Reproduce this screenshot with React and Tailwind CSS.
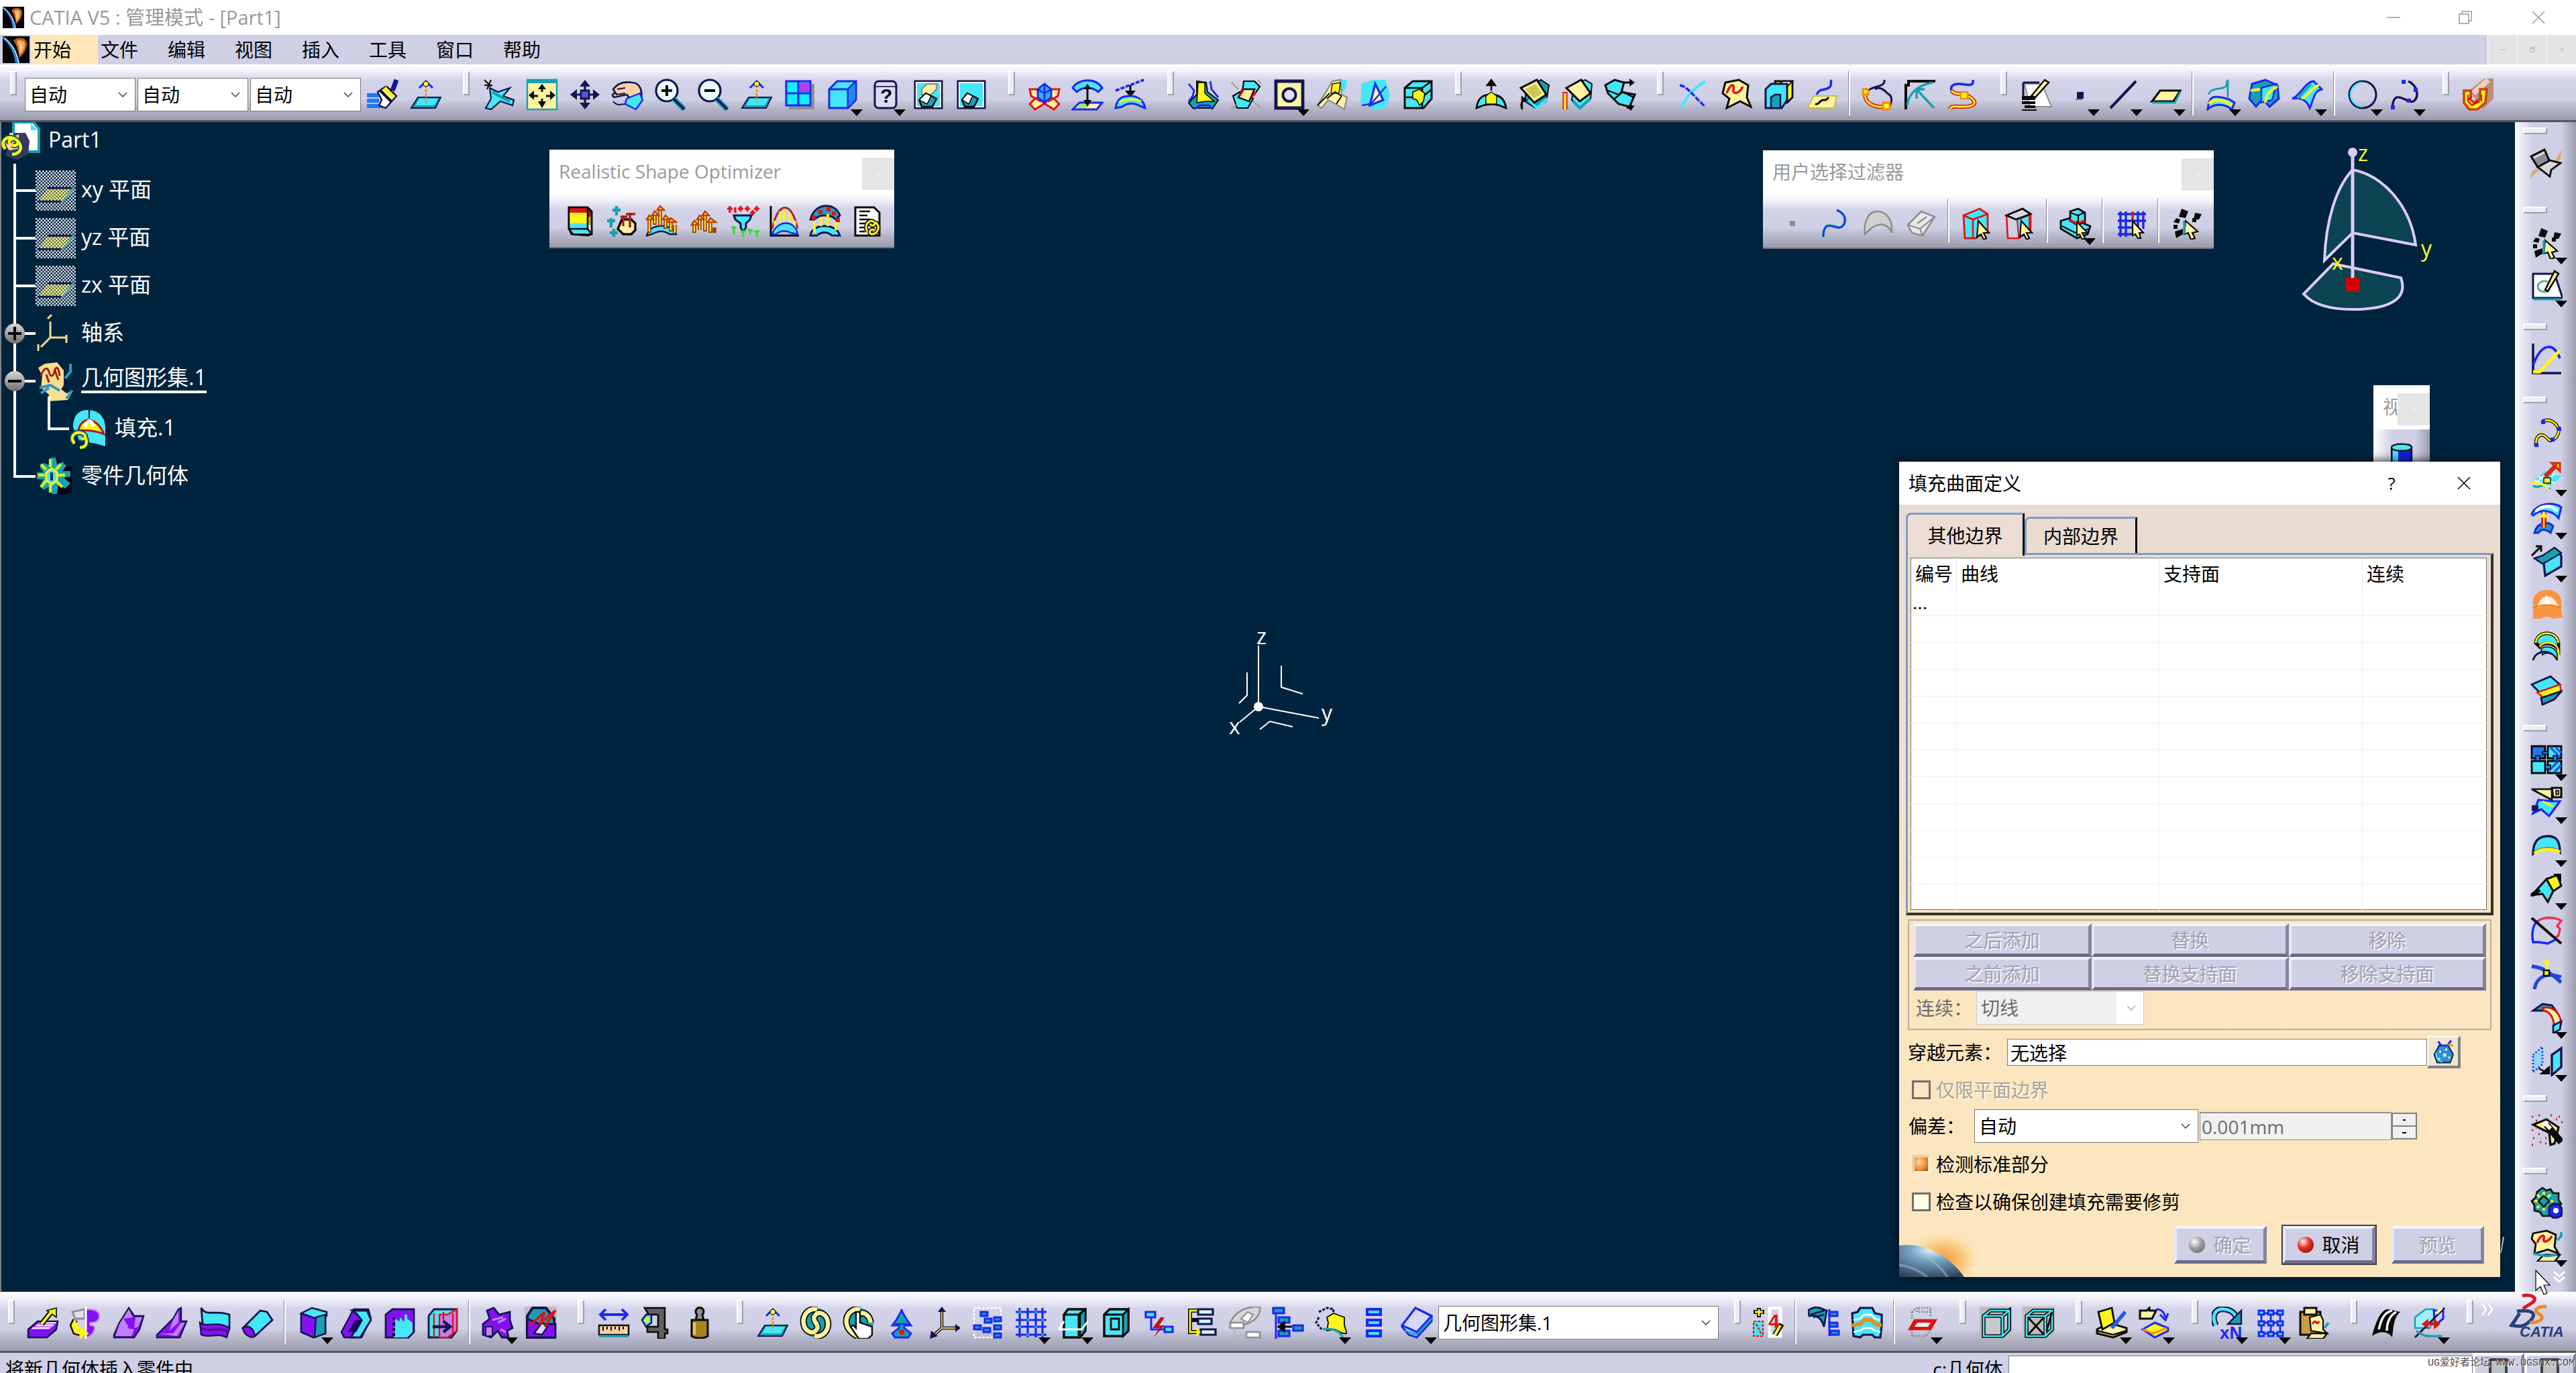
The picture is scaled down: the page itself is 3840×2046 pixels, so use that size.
import React from "react";

const C = "#45e6f8";
const T = "#18a0b0";
const N = "#15154f";
const B = "#1a28f0";
const Y = "#fff41c";
const L = "#fff3a0";
const K = "#0a0a0a";
const V = "#8410f4";
const P = "#c080f8";
const R = "#e01414";
const O = "#f08a10";
const W = "#ffffff";
const G = "#8e8e8e";

/* Each glyph is a list of [path, fill, stroke, strokeWidth, dash] on a 24 x 24 grid. */
const glyphs = {
  brush: [
    ["M0 11h11v3H0zM0 15h9v3H0zM0 19h14v3H0z", "#1e78f8"],
    ["M8 10l6-4 8 7-8 9-5-2 2-4z", W, N, 1.2],
    ["M10 9l8 8", "none", K, 2],
    ["M13 7l7 7", "none", Y, 3],
    ["M15 6l6 6", "none", K, 1],
    ["M19 9l3-8", "none", "#1010a0", 3.500],
  ],
  normal: [
    ["M6 14h17l-4 8H1z", T, N, 1],
    ["M7 15h14l-3 5H4z", C],
    ["M12 5v13", "none", O, 1.300, "2 1"],
    ["M7 7l5-5 5 5", "none", B, 1.500],
    ["M12 2a2 2 0 1 1 0 4 2 2 0 1 1 0-4z", Y, K, 0.500],
  ],
  fly: [
    ["M5 7l6 3 9-3-5 6 8 3-1 4-9-3-7 6-4-1 4-7z", C, N, 1.100],
    ["M7 10l5 3 8 4", "none", T, 2],
    ["M1 1l5 5M6 1L3 8M1 5l6 0", "none", K, 1],
  ],
  fit: [
    ["M1 1h22v22H1z", L, T, 1.200],
    ["M1 1h22v2.500H1z", T],
    ["M12 5v5M12 15v5M4 13h5M15 13h5", "none", K, 1.400],
    ["M9 8l3-4 3 4zM9 17l3 5 3-5zM6 9v7l-4-3.500zM18 9v7l4-3.500z", K],
  ],
  pan: [
    ["M12 3v18M3 12h18", "none", N, 1.600],
    ["M8 6l4-5 4 5zM8 18l4 5 4-5zM6 8v8l-5-4zM18 8v8l5-4z", N],
    ["M9 9h6v6H9z", "#5858d8", N, 1.400],
  ],
  rotate: [
    ["M1 8c3-4 8-6 14-5 5 0 8 5 7 11l-8 1-3-3-9 2c-2-1-2-3 1-3z", "#fbd0a8", N, 1.300],
    ["M11 15l10-4 2 5-5 7-8-4z", C, B, 1.200],
    ["M3 12l7-1M1 17c3 4 6 2 9 2M4 8l6-1", "none", N, 1],
  ],
  zoomin: [
    ["M9 1a7.500 7.500 0 1 1 0 16 7.500 7.500 0 1 1 0-16z", "#e8fcff", N, 1.600],
    ["M9 5v8M5 9h8", "none", K, 2],
    ["M14 15l8 8", "none", T, 4],
    ["M14 15l8 8", "none", N, 1.800],
  ],
  zoomout: [
    ["M9 1a7.500 7.500 0 1 1 0 16 7.500 7.500 0 1 1 0-16z", "#e8fcff", N, 1.600],
    ["M5 9h8", "none", K, 2],
    ["M14 15l8 8", "none", T, 4],
    ["M14 15l8 8", "none", N, 1.800],
  ],
  multiview: [
    ["M4 4h19v19H4z", G],
    ["M2 2h18v18H2z", "#10f0ff", B, 1.500],
    ["M12 3h7v7h-7z", "#b040e8"],
    ["M11 2v18M2 11h18", "none", B, 1.500],
  ],
  iso: [
    ["M2 8l6-6h14v14l-6 6H2z", C, B, 1.500],
    ["M2 8h14v14M16 8l6-6", "none", B, 1.500],
    ["M17 8l4-4v12l-4 4z", "#2088e8"],
  ],
  help: [["M7 2h10a3 3 0 0 1 3 3v14a3 3 0 0 1-3 3H7a3 3 0 0 1-3-3V5a3 3 0 0 1 3-3z", "#dcdcf4", N, 1.500], ["M4 6l16 0", "none", N, 0.800]],
  hide: [
    ["M2 2h20v20H2z", C, N, 1.500],
    ["M3 3h18v18H3z", "none", W, 1],
    ["M7 8l4-4h7v4l-4 4H7z", L, G, 1.200],
    ["M5 16l5-5 8 4-3 6H7z", T, K, 1.200],
    ["M5 16l5-5 4 2-3 6z", W, K, 0.800],
  ],
  swap: [
    ["M2 2h20v20H2z", C, N, 1.500],
    ["M3 3h18v18H3z", "none", W, 1],
    ["M5 16l4-5 8 4-3 6H7z", T, K, 1.200],
    ["M5 16l4-5 4 2-3 6z", W, K, 0.800],
  ],
  cross: [
    ["M1 8h5l6 6-3 3-7-4zM23 8h-5l-6 6 3 3 7-4zM1 19l4 4 8-5-3-4-5 1zM23 19l-4 4-8-5 3-4 5 1z", L, R, 1.500],
    ["M12 4l5 4v6l-5 4-5-4V8z", "#38a8ff", B, 1.400],
    ["M12 4v14M7 8l5 3 5-3", "none", B, 1.300],
  ],
  updown: [
    ["M1 7c4-7 17-8 22 0l-3 3c-4-4-12-4-16 0z", C, B, 1.500],
    ["M6 18h17l-4 5H1z", L, B, 1.500],
    ["M6 19h8l-3 3H4z", "#98f060"],
    ["M12 6v12", "none", K, 1.500],
    ["M9 8l3-4 3 4zM9 16l3 5 3-5z", K],
  ],
  project: [
    ["M1 9L22 1", "none", B, 1.800, "3 1"],
    ["M12 5v8", "none", K, 1.500],
    ["M8 9l4 5 4-5z", K],
    ["M1 22c1-8 6-9 11-9s10 3 11 9l-5-2c-3-2-8-2-12 1z", C, B, 1.500],
    ["M4 18c3-3 12-3 16-1", "none", Y, 1.600],
  ],
  join: [
    ["M7 2l7 1 1 7 8 6-4 6H4l-3-4 6-6z", T, K, 1],
    ["M8 3h5v8l7 6-6 0-7 1z", Y, K, 0.800],
    ["M1 4l4 5-1 4-3 4M17 2l1 6 5 6M5 23l4-3h7l3 3", "none", B, 1.400],
  ],
  healing: [
    ["M10 2h8l4 4-4 6-9-2zM2 13l5-3 10 5-4 7-8 0z", C, K, 1.100],
    ["M9 8h9l-4 9-8-3z", L, K, 1.200],
    ["M1 3l5 5M17 17l6 5M21 1l2 3M1 23l4-4", "none", G, 1.400, "1 1"],
    ["M7 13l3-5M16 14l3-4", "none", R, 1.500],
  ],
  untrim: [
    ["M2 2h20v20H2z", L, N, 2.400],
    ["M12 7.500a4.500 4.500 0 1 1 0 9.500 4.500 4.500 0 1 1 0-9.500z", "#e0e0f4", N, 2],
  ],
  disassemble: [
    ["M17 1h6l-1 7-4 3z", C],
    ["M8 9l4-7 6-1 1 11 4 2-2 9-5-3-7-4-5 6-3-2z", L, G, 1.200],
    ["M12 4l6-1-1 8-6 0z", Y, K, 0.700],
    ["M1 20l9-9M8 15l6-5 5 3M15 19l4-6", "none", K, 1],
  ],
  split: [
    ["M2 4l8-3h10l3 12-3 9-9 1L1 18z", C],
    ["M12 4l6 12-10 4z", L, B, 1.600],
    ["M8 20L20 6M2 20l6-1", "none", B, 1.200],
  ],
  cubecut: [
    ["M2 7l6-5h14v13l-6 7H2z", C, K, 1.500],
    ["M2 7h13v15M15 7l7-5M3 14h12l7-6", "none", K, 1.300],
    ["M8 10l5-2 4 3-1 6-3 3-2-4-3-1z", Y, K, 0.800],
  ],
  offset: [
    ["M1 22c1-8 5-10 11-10s10 3 11 10l-5-2c-3-1-8-1-12 0z", C, K, 1.400],
    ["M8 19v-6l4-3 4 3v6z", Y, K, 0.700],
    ["M12 9V2M9 5l3-4 3 4z", K, K, 1.200],
  ],
  sweep: [
    ["M6 8l11-7 6 4-2 12-8 5-8-5z", T, K, 1],
    ["M8 16l6 6 8-7", "none", C, 2],
    ["M2 7L14 1l7 11-9 6z", L, K, 1.500],
    ["M5 8l8-4 5 7-6 4z", "#cfc850"],
    ["M3 23c-2-5 0-6 3-7l-3-2z", K, K, 1.200],
  ],
  sweep2: [
    ["M10 4l8-3 5 3-1 11-8 7-6-6z", C, K, 1],
    ["M4 7l11-6 7 10-8 6z", L, K, 1.500],
    ["M3 23V10", "none", R, 3.600],
    ["M3 23V11", "none", Y, 1.800],
    ["M9 17l5 5 8-7", "none", T, 2],
  ],
  developed: [
    ["M1 5l7-4 7 2-2 7 10 2-4 9-8-2-8-8z", C, K, 1.500],
    ["M3 9l8 3 3-3M8 15l6-5 8 4", "none", K, 1.200],
    ["M14 3h6M17 22l4-2", "none", K, 1.500],
    ["M19 0l4 3-4 3zM20 24l3-4-6 1z", K],
  ],
  xcurve: [
    ["M3 22C8 12 12 8 21 2", "none", C, 2],
    ["M2 5c6 1 10 8 19 16", "none", B, 1.700, "4 1"],
  ],
  sheet: [
    ["M4 3l10-2 7 4-1 9 3 7-8-4-10 5 2-7-5-4z", L, K, 1.500],
    ["M5 11c3-8 6-7 5-3s4 4 7-2", "none", R, 1.700],
  ],
  stack: [
    ["M9 2h13v12l-4 4H9z", Y, K, 1.400],
    ["M15 2h7l-4 4h-9z", W, K, 1],
    ["M2 8l4-4h12v12l-4 6H2z", C, N, 1.500],
    ["M6 22v-8l3-2h4v10z", T, N, 1.200],
  ],
  note: [
    ["M6 13h17l-2 9H1z", L, "#c0c040", 1],
    ["M8 12c2-5 6-3 9-5s1-4 2-6", "none", B, 1.700],
    ["M7 19c3 1 3-3 6-3s2 0 4-2", "none", K, 1.500],
  ],
  curveA: [
    ["M17 1c1 6-10 4-13 9M19 11c5 2 4 9-1 12", "none", N, 1.500],
    ["M4 9c-4 6 2 13 13 12", "none", R, 3],
    ["M4 9c-4 6 2 13 13 12", "none", Y, 1.400],
    ["M1 8h4v4H1zM16 18h5v5h-5z", Y, O, 1.400],
    ["M10 8c3-2 7 0 9 3", "none", N, 1.500],
  ],
  curveB: [
    ["M1 23V5h2V2h20", "none", K, 2],
    ["M2 20c1-9 8-15 19-17", "none", T, 1.700],
    ["M22 22L9 8M9 15V8h6", "none", T, 1.700],
  ],
  curveC: [
    ["M19 1c1 6-6 3-10 3s-7 1-6 5", "none", B, 1.800],
    ["M3 9c3 4 8 1 14 5s3 7-5 7-9-1-10 2", "none", R, 3],
    ["M3 9c3 4 8 1 14 5s3 7-5 7-9-1-10 2", "none", Y, 1.400],
    ["M10 10h5v5h-5z", Y, O, 1.200],
  ],
  sketchtree: [
    ["M3 4h13l7 17H7z", W, G, 1],
    ["M2 3h12M2 3v10", "none", N, 1.500],
    ["M1 13h10v3H1zM1 17h10v2H1zM3 20h8v2H3zM1 23h11v1H1z", K],
    ["M8 13L18 1l3 2-10 11z", L, K, 1.200],
  ],
  point: [["M10 10h5v5h-5z", N], ["M9 15h5v1H9z", T]],
  line: [["M3 22L22 2", "none", N, 2]],
  plane: [["M8 9h15l-5 8H2z", L, K, 1.600], ["M2 18h17l4-8", "none", T, 1.400]],
  extrude: [
    ["M2 23c1-10 4-10 10-9s7 2 10 4l-2 5c-5-4-13-5-18 0z", C, B, 1.500],
    ["M3 19c4-5 11-3 17 1", "none", Y, 2.400],
    ["M3 12c0-6 12-3 13-7s0-3 1-4M17 1v13", "none", T, 1.400],
  ],
  revolve: [
    ["M3 4l10-3 9 4 1 10-7 6-5-6-5 6-5-6z", T, B, 1.500],
    ["M10 7l11-3-3 12-8 2z", C, B, 1.200],
    ["M2 9l7-1M13 18c1-6 3-9 9-12", "none", Y, 2],
  ],
  sphere: [
    ["M1 15c6-2 10-13 16-13l6 6c-6 1-6 8-9 14-2-6-7-8-13-7z", C, B, 1.500],
    ["M8 15c4-1 8-9 13-10", "none", Y, 1.800],
    ["M5 15l10-11", "none", T, 1.500],
  ],
  circle: [["M12 2a10 10 0 1 1 0 20 10 10 0 1 1 0-20z", "none", N, 1.500], ["M12 3a9 9 0 1 0 0 18", "none", C, 1.200]],
  spline: [
    ["M2 22c1-13 7-7 13-5s9-10-1-15", "none", N, 1.700],
    ["M1 20h3v3H1zM13 15h3v3h-3zM18 7h3v3h-3zM9 1h3v3H9z", B],
  ],
  bead: [
    ["M5 9l11-9h7v15l-8 8z", "#b8907c"],
    ["M8 11L19 1", "none", "#f0d0c0", 4],
    ["M1 9h5v7l3 2 4-3V8h5l-1 10-6 5H5l-4-5z", Y, "#d04010", 1.800],
    ["M4 12v5l3 3 6-3M4 16l3-3M7 20l4-4M14 12v5", "none", R, 1.100],
  ],
  /* shape optimiser */
  result: [
    ["M4 2h14l3 3v17l-3 1-12-1-2-4z", "#fff", K, 1.300],
    ["M4 2h14v4H4z", R],
    ["M4 6h14v8H4z", Y],
    ["M4 14h14v4H4zM4 18l3 3h14l-3-3z", C],
    ["M18 2l3 3v4h-3z", "#b01010"],
    ["M18 9h3v6h-3z", "#d0b000"],
    ["M4 2h14v16H4zM18 2l3 3v17H7l-3-4M18 18l3 4", "none", K, 1.300],
  ],
  loads: [
    ["M7 24v-6M4 21h6M5 17v-7M2 12h6M9 8V1M6 4h6", "none", T, 2.200],
    ["M13 11h7l3 3v5l-3 3h-6l-4-4z", L, K, 1.700],
    ["M14 8v8M19 6v11M12 9h5M16 7h7", "none", "#b01818", 1.700],
  ],
  arrowsurf: [
    ["M1 23c2-9 18-10 22-1l-5 0c-4-3-8-3-13 0z", C, N, 1.200],
    ["M3 21V10M7 15V7M11 16V3M15 18V9M19 20v-9M22 21v-6", "none", "#a04000", 2.800],
    ["M3 20V10M7 14V7M11 15V3M15 17V9M19 19v-8M22 21v-6", "none", Y, 1],
    ["M1 11l2-3 3 3zM5 8l2-3 3 3zM9 4l2-3 3 3zM13 11l2-3 3 3zM17 13l2-3 4 3z", Y, "#c04000", 1.200],
  ],
  arrows: [
    ["M6 21v-6M10 19v-8M14 20V8M18 21v-8M21 21v-4", "none", "#a04000", 2.800],
    ["M6 20v-6M10 19v-8M14 19V8M18 20v-7", "none", Y, 1],
    ["M4 15l2-3 3 3zM8 11l2-3 3 3zM12 8l2-3 3 3zM16 13l2-3 4 3z", Y, "#c04000", 1.200],
  ],
  funnel: [
    ["M2 6V1M6 6V2M10 5V1M15 5V1M19 8V4M22 5V1M0 3h4M8 3h4M13 3h4M17 6h4M20 3h4", "none", R, 1.600],
    ["M5 8h13l-1 3-3 3v3l-2 3-2-3v-3l-4-3z", C, N, 1.500],
    ["M5 22v-6M12 24v-5M17 22v-4M22 24v-5M3 17h4M10 20h4M15 19h4M20 20h4", "none", "#30e030", 1.600],
  ],
  chartsurf: [
    ["M2 1v22h21", "none", K, 1.500],
    ["M3 22c4-11 17-11 19 0l-5-1c-3-2-8-2-11 1z", C, B, 1.200],
    ["M3 18C8-4 18-2 22 18", "none", "#b02020", 1.400],
    ["M5 15V12M9 13V5M12 12V3M16 13V6M20 15v-3", "none", Y, 1.800],
  ],
  dome: [
    ["M1 11C4-2 20-2 23 8l-3 3c-4-4-12-4-16 0z", "#3098b8", N, 1.400],
    ["M1 23c1-9 19-10 22 0l-6 0c-3-3-8-3-11 0z", C, N, 1.400],
    ["M4 21v-8M9 16V9M14 16V7M20 19v-6", "none", Y, 2],
    ["M2 8h3v3H2zM7 4h3v3H7zM13 2h3v3h-3zM17 5h3v3h-3zM20 10h3v3h-3z", R],
  ],
  report: [
    ["M4 2h14l4 4v17H4z", W, K, 1.500],
    ["M7 5h8M7 8h6M7 11h8M7 14h5M7 17h4M7 20h4", "none", K, 1.200],
    ["M13 20c-3-5 2-10 5-7 2 2-2 4-3 1M19 13c4 3 2 9-3 9-3-1 0-5 2-3", "none", K, 3.200],
    ["M13 20c-3-5 2-10 5-7 2 2-2 4-3 1M19 13c4 3 2 9-3 9-3-1 0-5 2-3", "none", Y, 1.500],
  ],
  /* selection filters */
  pointoff: [["M10 10h4v4h-4z", "#909090"]],
  curvesel: [["M3 22c0-12 6-8 11-7s9-9-1-13", "none", T, 2], ["M3 22c0-12 6-8 11-7s9-9-1-13", "none", B, 1]],
  surfoff: [["M2 20C1 10 5 3 11 3s12 5 11 16c-2-5-6-7-10-6s-6 3-10 7z", "#d0d0d0", G, 1.300]],
  voloff: [["M2 13L12 3l10 4-9 14-8-2z", "#e8e8e8", G, 1.300], ["M2 13l9 3L22 7M11 16l2 5M9 12l7-5", "none", G, 1.100]],
  facesel: [
    ["M2 6L14 1l6 4v12l-9 6H3z", C, R, 1.400],
    ["M2 6l7 3 11-4M9 9v14", "none", R, 1.300],
    ["M13 10l8 9-4 0 2 4-2 1-2-4-3 2z", L, K, 1.100],
  ],
  edgesel: [
    ["M2 6L14 1l6 4v12l-9 6H3z", "#d0d0e4", R, 1.300],
    ["M10 9l9-3v11l-8 5z", C, R, 1],
    ["M2 6l12-5 6 4-11 4z", "#d8d8e8", K, 1.400],
    ["M13 10l8 9-4 0 2 4-2 1-2-4-3 2z", L, K, 1.100],
  ],
  featsel: [
    ["M1 10l7-2 15 6-2 6-8 3L1 16z", C, K, 1.400],
    ["M8 3l6-2 5 3v7l-6 2-5-3z", C, K, 1.400],
    ["M2 14l10 5 10-3M8 4l6 2 4-2M14 6v6", "none", K, 1.100],
    ["M7 9l6 3 6-2", "none", R, 1.800],
    ["M13 11l8 8-4 0 2 4-2 1-2-4-2 1z", L, K, 1],
  ],
  gridsel: [
    ["M4 3v19M8 3v19M17 3v17M21 3v13M2 5h21M2 10h21M2 15h12M2 20h12", "none", B, 1.700],
    ["M13 3v8", "none", R, 1.700],
    ["M13 10l8 9-3 0 1 4-2 0-2-3-2 1z", L, K, 1.100],
  ],
  snap: [
    ["M8 1l5 2-2 5-5-1zM18 4l5 1-2 4-4 0zM4 8l3 1-1 3-4-1zM2 13h3v3H2zM16 8h3v3h-3zM3 18l6-2v4l-5 3z", K],
    ["M11 10l9 8-4 1 2 4-3 1-2-5-3 1z", L, K, 1.100],
    ["M10 10v10", "none", T, 1.700],
  ],
  /* vertical bar */
  seat: [
    ["M0 23c3-12 6-6 12-8s8-9 12-14c-1 10-5 17-12 16S5 18 0 23z", "#dfa87c"],
    ["M1 6l10-5 4 9-9 4z", "#8c8c8c", K, 1.500],
    ["M6 14l9-5 8 2-7 5-1 5z", "#d8d8d8", K, 1.400],
    ["M3 7l8-4", "none", "#e0e0e0", 1.500],
  ],
  sketch: [
    ["M2 3h16l6 18H2z", W, N, 1.500],
    ["M2 22h21", "none", T, 1.500],
    ["M13 9a5 4 0 1 0 0 7", "none", "#40b890", 1.400],
    ["M11 15L18 1l3 2-8 13z", L, K, 1.300],
  ],
  graph: [
    ["M2 1v22h21", "none", N, 1.800],
    ["M2 17C8 1 17-1 22 12", "none", B, 1.900],
    ["M2 22h5L22 6", "none", Y, 2.400],
  ],
  splineY: [
    ["M4 22c0-10 6-9 9-5s9-3 8-7-6-9-12-6", "none", K, 2.500],
    ["M4 22c0-10 6-9 9-5s9-3 8-7-6-9-12-6", "none", Y, 1.300],
    ["M3 20h3v3H3zM15 16h3v3h-3zM20 8h3v3h-3zM8 3h3v3H8z", B],
  ],
  gridarrow: [
    ["M1 17l10-8 12 4-10 9z", C],
    ["M2 20c5 3 8-4 13 2", "none", T, 1.500],
    ["M3 16l12 5M6 13l12 5M13 10l-9 8M18 11l-9 9", "none", W, 1],
    ["M10 14h5v4h-5z", Y, K, 0.700],
    ["M11 13L20 4", "none", R, 3.200],
    ["M11 13L20 4M16 3h6v6z", Y, "#d03010", 1.600],
    ["M1 17c5 2 10 1 12 5", "none", Y, 1.500],
  ],
  surfarrow: [
    ["M1 9C5 0 18 0 23 4l-2 8C16 6 8 5 2 10z", C, B, 1.500],
    ["M4 7c5-5 12-5 16 0", "none", W, 2.200],
    ["M3 23c2-8 10-9 14-5l-2 5c-4-3-7-3-9 0z", T, B, 1.500],
    ["M10 19V8", "none", R, 4],
    ["M10 19V9M8 11l2-3 2 3z", Y, Y, 1.200],
  ],
  sheetarrow: [
    ["M9 10l10-6 4 4v8l-12 7-1-9z", C, N, 1.600],
    ["M3 10l6-2 9-6 5 4-10 6-4 2z", T, N, 1.200],
    ["M1 8l6-6M4 1h4v4", "none", K, 1.500],
  ],
  fillOn: [
    ["M2 20V9C4-1 21-1 23 9v7l1 6-7 1c-3-2-7-2-9 0l-6 0z", "#fb9440"],
    ["M5 15C7 4 17 3 21 14c-5-2-10-2-16 1z", "#ffe9d0"],
    ["M12 5l3 7-5 1z", W],
    ["M2 15c7-3 14-3 21 0", "none", "#e87820", 1],
  ],
  arcs: [
    ["M4 9C5-1 20 0 21 9v5c-3-5-11-6-14-2z", C, K, 2.400],
    ["M4 9C5-1 20 0 21 9M7 12c2-5 13-4 14 3v5", "none", Y, 1.300],
    ["M8 14c2-3 10-3 12 3v4c-3-4-8-6-11-3z", C, K, 0.800],
    ["M2 22C4 14 16 13 20 22", "none", N, 1.400],
  ],
  blend: [
    ["M1 8l14-6 7 6-15 6z", C, N, 1.400],
    ["M5 14l17-6 1 6-13 4z", Y, R, 1.200],
    ["M8 18l15-5-5 6-9 4z", T, N, 1.400],
  ],
  puzzle: [
    ["M1 2h10v9H1z", "#1e78e8", K, 1.400],
    ["M13 2h10v9H13z", C, K, 1.400],
    ["M1 13h10v9H1z", C, K, 1.400],
    ["M13 13h10v9H13z", C, K, 1.400],
    ["M15 3l7 7M19 3l4 4M14 20l7-7M18 21l5-5", "none", "#1e60e8", 1.800],
    ["M9 6h4v2h-4zM4 9h3v4H4zM11 16h4v3h-4zM17 9h3v4h-3z", "#1e78e8", K, 0.800],
  ],
  saw: [
    ["M6 10l11 1 5 0-8 11-6-5-6 3z", C, B, 1.600],
    ["M9 11l8 4", "none", Y, 1.500],
    ["M1 2h15v8z", L, K, 1.300],
    ["M16 1h7v7h-6z", L, K, 1.600],
    ["M19 3h2v3h-2z", G, K, 0.800],
    ["M1 14h5v4H1z", N],
  ],
  boundary: [["M2 18C2 8 7 5 13 5s9 3 9 12c-4-4-15-4-20 1z", C, N, 1.700], ["M3 18c4-4 14-4 19-1", "none", Y, 2.400]],
  extract: [
    ["M1 17L12 5l8 3-7 14-4-6z", C, K, 1.500],
    ["M12 5l8-3 3 8-6 4z", Y, K, 1.500],
    ["M17 1h6v6z", K],
    ["M1 17l6-4", "none", K, 3],
  ],
  trim: [
    ["M6 4C10 1 18 1 23 4l-3 4 2 2-1 5-3 2", "none", "#f03048", 1.700],
    ["M6 4C1 7 1 15 2 20l4 0 7 1 6-3", "none", B, 1.700],
    ["M1 2l22 19", "none", K, 2],
  ],
  combine: [
    ["M1 6c10 1 15 6 22 12", "none", "#2048e0", 2.700],
    ["M3 23C5 12 14 11 23 14", "none", "#2048e0", 2.500],
    ["M12 10V2", "none", Y, 2],
    ["M9 4l3-4 3 4z", Y],
    ["M10 9h4v4h-4z", Y, K, 1.200],
  ],
  fillet: [
    ["M2 7l7-5 7 1 3 4-7 0z", T, N, 1.400],
    ["M9 5c8-2 13 4 14 11l-5 3C17 12 15 8 10 7z", L, R, 1.500],
    ["M17 18l6-3-1 6-5 3z", C, N, 1.400],
  ],
  translate: [
    ["M2 8l7-6v13l-7 6z", "#90d8f0", B, 1.400, "1 1.500"],
    ["M16 8l7-5v14l-7 6z", C, N, 1.700],
    ["M6 18l6 3M14 17v5h-6z", K, K, 1.100],
  ],
  wand: [
    ["M2 8l10-4 9 6-3 12-3 1-1-9z", L, K, 1.600],
    ["M12 8l11 13", "none", K, 5],
    ["M10 6l5 5", "none", W, 3],
    ["M1 2h1M6 1h1M15 1h1M21 2h1M1 12h1M2 18h1M6 15h1M7 21h1M11 18h1M4 10h1M1 23h1M11 22h1M4 5h1M19 4h1M23 6h1", "none", R, 1.600],
  ],
  gears: [
    ["M9 1l3 2 3-1 2 3 4 0v5l2 3-3 3-5 6H9l-2-3-4-1v-4L1 11l3-3 1-4z", T, K, 1.300],
    ["M10 4v14M3 11h14M5 6l10 10M15 6L5 16", "none", Y, 1.800, "3 1"],
    ["M10 7l4 4-4 4-4-4z", T, K, 1.200],
    ["M14 15l3-2h4l3 4-1 5-5 2-4-3z", B, N, 1.400],
    ["M19 16a2 2 0 1 1 0 4 2 2 0 1 1 0-4z", W],
  ],
  sheetplane: [
    ["M2 3l10-2 7 3-1 9 3 5-8-3-10 3 1-7-3-4z", L, K, 1.400],
    ["M5 10c3-7 6-6 5-3s3 3 6-2", "none", R, 1.800],
    ["M10 19h12l-4 5H5z", L, K, 1.200],
    ["M2 18l10 2 8-1M20 8l3-3V2", "none", T, 1.800],
  ],
  /* bottom bar */
  pad: [
    ["M1 17l7-6h15l-1 6-7 6H1z", V, N, 1.200],
    ["M9 12h13l-5 5H3z", P],
    ["M4 16h13M7 14h13M10 12h12", "none", W, 0.800],
    ["M11 13l8-10", "none", K, 4],
    ["M11 13l8-10M15 3l7-2v7z", Y, K, 0.800],
    ["M11 13l8-10", "none", Y, 2],
  ],
  shaft: [
    ["M2 4l9-2v7H4z", "#e0e0e8", G, 1.400],
    ["M12 2c6 0 10 1 10 5s-3 5-7 5v2c4 0 4 2 3 4s-3 5-6 5z", V, P, 1],
    ["M12 0v24", "none", W, 1.500],
    ["M4 10l-2 4 2 5 7 2", "none", K, 4],
    ["M4 10l-2 4 2 5 6 2M8 16v7l5-3z", Y, Y, 1.600],
  ],
  rib: [["M1 21l4-9 7-11 4 6h7l-3 10-4 6H1z", V, N, 1.200], ["M12 2l3 6-4 8 5 1-2 5H2l3-9z", P], ["M8 9l5 8 3-9z", V], ["M17 8h5l-3 7-3 1z", P]],
  stiffener: [["M1 21L13 9l4-7 2-1v10h4l-5 12H1z", V, N, 1.200], ["M13 10l4-7v9l-7 6zM2 20h11l6-8h3l-6 10z", P]],
  thicksurf: [
    ["M2 1c4 7 10 1 21 5v10c-8-4-12 2-16-1l-4-2z", C, N, 1.400],
    ["M1 12c5 4 13-2 22 4l-2 7c-8-4-12 1-19-2z", V, N, 1.200],
    ["M2 16c6 4 13-2 20 3", "none", "#501090", 1.600],
  ],
  closesurf: [
    ["M1 16L14 3l5 1 4 6-13 12-2-4z", C, N, 1.400],
    ["M1 16c4-3 8 0 9 6-2 2-8 0-9-6z", V, N, 1.200],
  ],
  thickness: [
    ["M3 6l12-4 6 4v14l-9 3-9-4z", V, N, 1.400],
    ["M3 5l8-4 11 3v3l-8 2z", C, N, 1.200],
    ["M14 8l7-2v14l-8 3z", T, N, 1.200],
  ],
  shell: [["M1 19L10 2h11l2 7-7 14H3z", V, N, 1.200], ["M9 3h11l3 7-8 13H8l8-13-4-5z", C, N, 1.400], ["M11 10h6l-5 9H6z", "#180858"]],
  thread: [
    ["M2 6l5-4h16v17l-4 4H2z", V, N, 1.400],
    ["M9 9l3 2 1-3 2 3 3-2 4 3v7l-4 4H8l1-4-2-2 2-2z", C],
    ["M17 6v16", "none", C, 2],
    ["M8 8v14", "none", K, 2, "2 2"],
  ],
  splitbody: [
    ["M2 7l4-5h17v16l-4 5H2z", C, N, 1.400],
    ["M10 6h6l7-4v16l-7 5h-6z", P, R, 1.200],
    ["M6 5v18M13 4v8M20 5v15", "none", R, 1.200],
    ["M5 15h11M13 11l5 4-5 4", "none", N, 2.200],
  ],
  boolean: [
    ["M4 3l5-2 4 5 8-2v6l2 6-4 2 1 5-5 0-3-5-5 5-6-2v-8l5-4z", V, N, 1.400],
    ["M3 15h5v7H3z", P, N, 1],
    ["M8 10l8-2M12 12l6-3M14 17l4 2", "none", P, 1.600],
  ],
  remove: [
    ["M0 0h24v24H0z", "#c0bcc4"],
    ["M2 7l4-6h10l6 8v14H2z", T, N, 2],
    ["M2 9l9 4h12v10H2z", V, N, 1.400],
    ["M7 20l6-8 4 3-4 6z", "#e0d8f8", N, 1.200],
    ["M4 14L15 4l-3 8 11-9-8 12", "none", R, 1.800],
  ],
  measure: [
    ["M2 6h20M6 2L2 6l4 4M18 2l4 4-4 4", "none", B, 1.900],
    ["M1 14h22v7H1z", "#fbd0a8", K, 1.200],
    ["M1 22h22", "none", T, 1.700],
    ["M4 15v3M7 15v2M10 15v3M13 15v2M16 15v3M19 15v2", "none", K, 1],
  ],
  caliper: [
    ["M3 1h15v16h2v3h-2v4h-5v-5H5v-4h8V6H6z", "#606060", K, 1.300],
    ["M1 10l3-4 4 0v6l-4 3z", C, N, 1.200],
    ["M2 11l4-4v5z", Y],
  ],
  weight: [
    ["M10 6a3 3 0 1 1 4 0l1 4H9z", G, K, 1.500],
    ["M6 10h12v12c-3 2-9 2-12 0z", "#a88420", K, 1.500],
    ["M8 12v9", "none", "#e0c860", 2],
  ],
  swirl: [
    ["M12 1a11 11 0 1 1 0 22 11 11 0 1 1 0-22z", T],
    ["M13 2C6 1 2 7 3 13c1 5 6 8 9 5s0-5 0-7M11 22c7 1 11-5 10-11-1-5-6-8-9-5s0 5 0 7", "none", K, 5],
    ["M13 2C6 1 2 7 3 13c1 5 6 8 9 5s0-5 0-7M11 22c7 1 11-5 10-11-1-5-6-8-9-5s0 5 0 7", "none", L, 3.200],
  ],
  swirlhand: [
    ["M12 1a11 11 0 1 1 0 22 11 11 0 1 1 0-22z", T],
    ["M13 2C6 1 2 7 3 13c1 4 4 7 8 9M21 12c-1-6-6-9-9-6", "none", K, 5],
    ["M13 2C6 1 2 7 3 13c1 4 4 7 8 9M21 12c-1-6-6-9-9-6", "none", L, 3.200],
    ["M10 4h3v8l9 3v6l-3 3h-7l-6-9 2-1 2 2z", W, K, 1.200],
  ],
  copter: [
    ["M12 2v20", "none", B, 1.700],
    ["M12 3l4 7 3 4h-5v2l5 4-2 3h-10l-2-3 5-4v-2H5l3-4z", T, B, 1.400],
    ["M12 17a2 2 0 1 1 0 4 2 2 0 1 1 0-4z", R],
    ["M7 13h10", "none", B, 1.200],
  ],
  axis: [
    ["M10 2v14h13M10 16l-7 6", "none", K, 2.200],
    ["M10 3v13h10M10 16l-7 6", "none", "#e8d080", 0.900],
    ["M7 4l3-4 3 4zM20 13l4 3-4 3zM2 18l-1 6 6-2z", N],
  ],
  treeboxes: [
    ["M2 1h20v22H2z", "none", W, 1.200, "2 1"],
    ["M7 4h5v3H7zM10 9h5v3h-5zM17 8h5v3h-5zM2 14h5v3H2zM9 16h5v3H9zM17 14h5v3h-5zM17 20h5v3h-5z", T, B, 1.500],
  ],
  grid: [
    ["M4 1v22M10 1v22M16 1v22M21 1v22M1 4h23M1 10h23M1 15h23M1 21h23", "none", B, 1.600],
    ["M3 3h2v2H3zM9 9h2v2H9zM15 3h2v2h-2zM3 14h2v2H3zM15 14h2v2h-2zM9 20h2v2H9zM20 9h2v2h-2zM20 20h2v2h-2z", T],
  ],
  blockplane: [
    ["M5 6l3-4h13v16l-4 5H5z", C, K, 1.700],
    ["M5 6h11v16M16 6l5-4", "none", K, 1.500],
    ["M17 6l4-4v16l-4 5z", T, K, 1.200],
    ["M1 17l4-6M1 17h17l5-6", "none", W, 1.600],
  ],
  block: [
    ["M3 6l4-4h14v16l-4 4H3z", C, K, 1.700],
    ["M17 6l4-4v16l-4 4z", T, K, 1.400],
    ["M3 6h14M8 9h6v8H8z", "none", K, 1.400],
  ],
  bolt: [
    ["M2 4h7v4H2zM16 15h6v4h-6z", C, B, 1.600],
    ["M6 8v9h10", "none", B, 1.500],
    ["M13 8l-6 8h5l-4 7 8-9h-4l4-6z", "#c01020"],
  ],
  treeyellow: [
    ["M9 2h11v4H9zM9 9h10v4H9zM11 17h11v4H11z", "#d8f8ff", N, 1.600],
    ["M8 3H3v16h7M4 10h5", "none", K, 3],
    ["M8 3H3v16h6M7 16l3 3-3 3", "none", Y, 1.400],
  ],
  chainoff: [
    ["M1 12C5 3 13 0 23 0c1 9-8 14-17 14z", "#d8d8d8", G, 1.200],
    ["M9 9l5-5 4 2-4 6z", W, G, 1],
    ["M1 12h10v4H1zM13 19h10v4H13z", W, G, 1.300],
    ["M4 16v6h9", "none", "#b8b8b8", 1.700],
  ],
  treearrow: [
    ["M1 1h8v4H1zM5 8h8v4H5zM5 18h8v4H5zM16 14h7v4h-7z", T, B, 1.600],
    ["M3 5v19M9 12v6", "none", B, 1.500],
    ["M15 15H5M9 12l-4 3 4 3z", K, K, 1.600],
  ],
  patch: [
    ["M3 4l6-3 5 1-1 6M3 8L1 12l4 5", "none", N, 1.600, "2 1"],
    ["M9 8l5-3 8 3 0 6 2 6-3 0-6-3-6 1 1-6z", Y, K, 0.900],
    ["M6 17c5-1 13 0 15 7", "none", T, 1.700],
  ],
  boxes: [["M7 2h10v4H7zM7 10h10v4H7zM7 18h10v4H7z", C, B, 2]],
  body: [
    ["M1 15l5 6 6 2 11-12 0-4-10-5z", "#a0e0f8", B, 1.500],
    ["M1 14L11 1l12 6-11 12z", "#d8d8f4", B, 1.600],
    ["M3 18l9 3L23 9", "none", T, 1.400],
  ],
  magic: [
    ["M13 1h8v21h-8z", "none", W, 2.500],
    ["M5 1v7M1 4h8", "none", K, 3],
    ["M5 2v5M2 4h6", "none", Y, 1.400],
    ["M1 11h7v11H1zM3 13l4 8", C, R, 1.100, "2 1"],
    ["M17 21l5-8", "none", K, 4],
    ["M17 21l4-7", "none", Y, 2],
  ],
  arctree: [
    ["M0 3c7-5 10-1 14 0l-2 12C10 8 6 6 1 7z", T, N, 1.400],
    ["M2 6l10-3M4 8l8-2", "none", N, 1.200],
    ["M16 4h6v3h-6zM16 12h6v3h-6zM17 18h6v3h-6z", T, B, 1.500],
    ["M16 2v20", "none", B, 1.500],
  ],
  waves: [
    ["M1 5l4-1 2-3h9l2 4 5 1v8l-1 9h-4l-2-2h-7l-2 2-5-1z", C, N, 1.600],
    ["M1 14l6-1 3-3h5l3 3 5 1", "none", O, 2.800],
    ["M2 10l5-1 3-3h5l3 3 4 1M2 19l5-1 3-2h5l3 2 4 1", "none", W, 1.400],
  ],
  redplane: [
    ["M4 4l4-3h10v3M4 4v5M18 4v4M4 17v5h10l4-4M8 1v3h10", "none", G, 1.600, "1 1"],
    ["M6 10h16l-4 7H2z", R, R, 1.200],
    ["M8 12h10l-2 3H6z", W],
  ],
  boxgray: [
    ["M0 0h24v24H0z", "#bdbdbd"],
    ["M3 7l5-4h14v14l-5 5H3z", "#c8c8c8", K, 2.800],
    ["M3 7h14v15M17 7l5-4v14l-5 5", "none", K, 2.800],
    ["M3 7l5-4h14v14l-5 5H3zM3 7h14v15M17 7l5-4", "none", C, 1.300],
  ],
  boxx: [
    ["M0 0h24v24H0z", "#bdbdbd"],
    ["M3 7l5-4h14v14l-5 5H3zM3 7h14v15M17 7l5-4", "none", K, 2.800],
    ["M3 7l5-4h14v14l-5 5H3zM3 7h14v15M17 7l5-4", "none", C, 1.300],
    ["M4 8l12 13M16 8L4 21M18 18l4-14", "none", K, 1.400],
  ],
  catalog: [
    ["M1 17l9-5 13 4v3l-10 4-12-3z", L, K, 1.500],
    ["M2 4l10-3 2 11-9 5z", Y, K, 1.400],
    ["M12 16l10-12", "none", "#1860e0", 2.800],
    ["M1 18l12 3 10-3", "none", K, 1.200],
  ],
  open: [
    ["M1 3h5l2-2v2h5l-3 6H1z", L, K, 1.500],
    ["M13 2c5 0 6 3 7 6M16 6l4 4 2-5", "none", B, 1.500],
    ["M3 17l9-5 10 4v2l-10 5z", Y, B, 1.500],
    ["M3 17l8 3 10-4", "none", O, 1.400],
  ],
  repeat: [["M3 14C-1 5 4 1 10 2s8 4 9 8", "none", N, 4.600], ["M3 14C-1 5 4 1 10 2s8 4 9 8", "none", C, 2.400], ["M22 3v10l-10 0z", T, N, 1.200]],
  dots: [
    ["M5 4v17M12 4v17M19 4v17M5 5h14M5 12h14M5 20h14", "none", B, 1.400],
    ["M3 3h4v3H3zM10 3h4v3h-4zM17 3h4v3h-4zM3 11h4v3H3zM10 11h4v3h-4zM17 11h4v3h-4zM3 19h4v3H3zM10 19h4v3h-4zM17 19h4v3h-4z", C, B, 1.400],
  ],
  clipboard: [
    ["M2 4h15v15l-4 2H2z", "#c8a040", K, 1.500],
    ["M5 1h9v5H5z", L, K, 1.400],
    ["M9 8l8-2 2 4v7l3 3-12-2z", L, K, 1.100],
    ["M11 13c3-5 3 2 5-2", "none", R, 1.600],
    ["M10 20h12l-3 4H7z", L, K, 1.200],
    ["M20 16l3-4", "none", T, 1.800],
  ],
  zebra: [
    ["M1 22C4 10 8 2 13 2l9 2c-5 4-5 12-6 19-3-5-10-5-15-1z", K],
    ["M6 17C8 8 11 4 16 3M12 18c0-7 3-12 7-14", "none", W, 1.700],
  ],
  distance: [
    ["M1 8l8-6 6 0 0 7-3 7-11 0z", "#a0f0ff", T, 1.200],
    ["M15 3h7v6l-6 5z", "none", B, 1.500],
    ["M1 23L23 1", "none", N, 1.400],
    ["M7 13h12", "none", R, 1.800],
    ["M11 9l-5 4 5 4zM15 9l5 4-5 4z", R],
    ["M2 18c6 5 9 4 19 4", "none", T, 1.700],
    ["M17 5l4-4", "none", L, 2.200],
  ],
  bag: [
    ["M8 6h9l5 9-3 8H6l-3-8z", "#2890d8", N, 1.200],
    ["M7 2l3 4h6l4-5", "none", B, 2],
    ["M16 5l6 1", "none", O, 1.800],
    ["M8 11h2v2H8zM14 9h2v2h-2zM12 14h3v3h-3zM7 18h2v2H7zM17 17h2v2h-2z", L],
    ["M5 13c0 6 3 9 6 9", "none", C, 1.500],
  ],
  cylinder: [
    ["M3 4v18c4 3 14 3 18 0V4z", "#1020d8", K, 1.300],
    ["M4 5h5v18l-5-2z", C],
    ["M12 1c5 0 9 1 9 3s-4 3-9 3-9-1-9-3 4-3 9-3z", C, K, 1.300],
  ],
};

const labels = { help: [["?", 8, 18, 15, K]], repeat: [["xN", 6, 24, 13, B]], magic: [["4", 12, 16, 15, R]] };

function Glyph({ name, className = "size-12" }) {
  return (
    <svg viewBox="0 0 24 24" className={className} aria-hidden="true">
      {glyphs[name].map(([d, fill, stroke, width, dash], i) => (
        <path key={i} d={d} fill={fill} stroke={stroke || "none"} strokeWidth={width || 0} strokeDasharray={dash} />
      ))}
      {(labels[name] || []).map(([t, x, y, s, f]) => (
        <text key={t} x={x} y={y} fontSize={s} fill={f} fontWeight="700" fontFamily="Liberation Sans">
          {t}
        </text>
      ))}
    </svg>
  );
}

function More() {
  return (
    <svg viewBox="0 0 18 10" className="absolute right-0.5 bottom-0 h-[10px] w-[18px]" aria-hidden="true">
      <path d="M0 0h18L9 10z" fill="#000" />
    </svg>
  );
}

function Tool({ id, className = "h-16 w-16" }) {
  const more = id.endsWith("*");
  const name = more ? id.slice(0, -1) : id;
  return (
    <button type="button" aria-label={name} className={`relative flex shrink-0 items-center justify-center ${className}`}>
      <Glyph name={name} />
      {more && <More />}
    </button>
  );
}

const Grip = ({ className = "ml-[23px] mr-3" }) => (
  <span className={`h-9 w-[10px] shrink-0 self-start border-2 border-t-white border-l-white border-r-[#a0a0ac] border-b-[#a0a0ac] bg-[#ececf4] ${className}`} />
);
const Sep = () => <span className="mr-[9px] ml-[7px] h-[66px] w-[3px] shrink-0 self-start border-r-2 border-l border-r-white border-l-[#8c8c98]" />;

const Row = ({ items }) =>
  items.map((it, i) => (it === "#" ? <Grip key={i} /> : it === "|" ? <Sep key={i} /> : <Tool key={i} id={it} />));

const barBg = "bg-[linear-gradient(to_bottom,#ffffff_0%,#f0f0f8_12%,#d2d2e8_30%,#cfcfe5_62%,#b4b4c8_80%,#9c9cae_100%)]";

function Combo({ label, value, className, disabled }) {
  return (
    <span className={`relative flex shrink-0 ${className}`}>
      <select
        aria-label={label}
        disabled={disabled}
        className={`w-full appearance-none border pl-1.5 text-[28px] leading-9 ${
          disabled ? "border-[#ccc] bg-[linear-gradient(to_right,#f0f0f0_84%,#fff_84%)] text-[#6d6d6d] opacity-100" : "border-[#7a7a7a] bg-white text-black"
        }`}
      >
        <option>{value}</option>
      </select>
      <svg viewBox="0 0 14 8" className="pointer-events-none absolute top-1/2 right-3 h-2 w-3.5 -translate-y-1/2" aria-hidden="true">
        <path d="M1 1l6 6 6-6" fill="none" stroke={disabled ? "#aaa" : "#444"} strokeWidth="1.500" />
      </svg>
    </span>
  );
}

function AppLogo({ className }) {
  return (
    <svg viewBox="0 0 32 32" className={className} aria-hidden="true">
      <rect width="32" height="32" fill="#060606" />
      <path d="M13 5c5-5 16-4 16 4-1 10-6 13-9 17-1-8-3-14-7-21z" fill="#c85810" />
      <path d="M17 6c6-3 11 0 9 7-1 5-4 7-6 10 0-6-1-11-3-17z" fill="#f8a850" />
      <path d="M20 8c4 0 4 6 1 11 0-4 0-8-1-11z" fill="#ffe8c0" />
      <path d="M0 3c8 6 14 18 15 29h5C18 18 10 6 0 0z" fill="#2878d0" />
      <path d="M2 2c9 7 15 18 17 30" fill="none" stroke="#a0dcff" strokeWidth="1.500" />
    </svg>
  );
}

const WinGlyph = ({ d, className }) => (
  <svg viewBox="0 0 20 20" className={className} aria-hidden="true">
    <path d={d} fill="none" stroke="currentColor" strokeWidth="1.500" />
  </svg>
);
const MIN = "M0 10h20";
const RESTORE = "M1 5h14v14H1zM5 5V1h14v14h-4";
const CLOSE = "M1 1l18 18M19 1L1 19";

const topA = ["brush", "normal", "#", "fly", "fit", "pan", "rotate", "zoomin", "zoomout", "normal", "multiview", "iso*", "help*", "hide", "swap", "#", "cross", "updown", "project", "#", "join", "healing", "untrim*", "disassemble", "split", "cubecut", "#", "offset", "sweep", "sweep2", "developed", "#", "xcurve", "sheet", "stack", "note", "|", "curveA", "curveB", "curveC", "#", "sketchtree", "point*", "line*", "plane*", "|", "extrude*", "revolve", "sphere*", "|", "circle*", "spline*", "#", "bead"];
const botA = ["pad", "shaft", "rib", "stiffener", "thicksurf", "closesurf", "|", "thickness*", "shell", "thread", "splitbody", "|", "boolean*", "remove", "#", "measure", "caliper", "weight", "#", "normal", "swirl", "swirlhand", "copter", "axis", "treeboxes", "grid*", "blockplane*", "block", "bolt", "treeyellow", "chainoff", "treearrow", "patch*", "boxes", "body*"];
const botB = ["magic", "|", "arctree", "waves", "|", "redplane*", "#", "boxgray", "boxx", "#", "catalog*", "open*", "#", "repeat*", "dots*", "clipboard", "#", "zebra", "distance*", "#"];
const side = [
  ["snap*", "sketch*"],
  ["graph"],
  ["splineY", "gridarrow*", "surfarrow*", "sheetarrow*", "fillOn", "arcs", "blend"],
  ["puzzle*", "saw*", "boundary*", "extract*", "trim", "combine", "fillet*", "translate*"],
  ["wand"],
  ["gears", "sheetplane*"],
];
const sideGaps = ["mt-[27px] mb-3", "mt-6 mb-[10px]", "mt-[25px] mb-[11px]", "mt-5 mb-[10px]", "mt-5 mb-[10px]", "mt-6 mb-[10px]"];
const SideGrip = ({ className }) => (
  <span className={`ml-3 h-[10px] w-9 shrink-0 self-start border-2 border-t-white border-l-white border-r-[#a0a0ac] border-b-[#a0a0ac] bg-[#ececf4] ${className}`} />
);

function Palette({ title, className, children }) {
  return (
    <section className={`absolute flex flex-col overflow-hidden bg-white ${className}`}>
      <header className="flex h-[66px] shrink-0 items-center justify-between">
        <h2 className="overflow-hidden pb-0.5 pl-3.5 text-[28px] leading-10 whitespace-nowrap text-[#999]">{title}</h2>
        <button type="button" aria-label="close" className="mt-1.5 flex h-12 w-12 shrink-0 items-center justify-center bg-[#e5e5e5] text-[#fafafa]">
          <WinGlyph d={CLOSE} className="size-2.5" />
        </button>
      </header>
      {children}
    </section>
  );
}

/* ---------- specification tree ---------- */
function PlaneIcon() {
  return (
    <svg viewBox="0 0 24 24" className="h-[60px] w-[60px]" aria-hidden="true">
      <defs>
        <pattern id="chk" width="2" height="2" patternUnits="userSpaceOnUse">
          <path d="M0 0h1v1H0zM1 1h1v1H1z" fill="#dcdee8" />
        </pattern>
        <pattern id="chy" width="2" height="2" patternUnits="userSpaceOnUse">
          <path d="M0 0h2v2H0z" fill="#606c50" />
          <path d="M0 0h1v1H0zM1 1h1v1H1z" fill="#ffff90" />
        </pattern>
      </defs>
      <path d="M0 0h24v24H0z" fill="url(#chk)" />
      <path d="M7 11h15l-5 7H2z" fill="url(#chy)" />
      <path d="M7 10.500h17M1 18.500h14" stroke="#101850" strokeWidth="1.200" />
      <path d="M16 19l7-9" stroke="#58a0a8" strokeWidth="1.300" />
    </svg>
  );
}
const swirlD = "M4 20c-4-5 0-10 6-8s3 7-1 5M9 24c6 0 8-5 5-9s-8-3-7 1";
const treeIcons = {
  part: (
    <svg viewBox="0 0 30 30" className="h-[60px] w-[60px]" aria-hidden="true">
      <path d="M10 0h15l4 5v17H10z" fill="#fff" stroke={T} strokeWidth="2" />
      <path d="M23 1l5 5h-5z" fill={C} />
      <path d="M9 8h10l3 6-1 10-8 4-9-3z" fill="#3a3860" />
      <path d="M2 15l2-5h3V8h3v3l4-2v5l2 3-3 3-6 1z" fill="#f8d890" />
      <path d={swirlD} fill="none" stroke="#0a5060" strokeWidth="4" />
      <path d={swirlD} fill="none" stroke={Y} strokeWidth="2.200" />
    </svg>
  ),
  plane: <PlaneIcon />,
  axis: (
    <svg viewBox="0 0 30 30" className="h-[60px] w-[60px]" aria-hidden="true">
      <path d="M11 6v12h12M11 18l-7 7M23 16v6M2 23v5M9 4l3-3" fill="none" stroke="#f8d890" strokeWidth="1.500" />
    </svg>
  ),
  set: (
    <svg viewBox="0 0 30 30" className="h-[60px] w-[60px]" aria-hidden="true">
      <path d="M2 5l5-3 9-1 5 6v11l-2 3 4 3 5-2-4 7-15 1 1-5-6-5 1-9z" fill="#fbe08c" />
      <path d="M4 11c2-6 5-7 6-3s3 4 4 0 3-5 4 3M8 10l2 6M14 6l3 8" fill="none" stroke="#a81818" strokeWidth="1.500" />
      <path d="M3 20l8-2 7 4M4 24l6-4M26 2v6l-4 5M23 28l4-6" fill="none" stroke="#3098c8" strokeWidth="2" />
    </svg>
  ),
  fill: (
    <svg viewBox="0 0 30 30" className="h-[60px] w-[60px]" aria-hidden="true">
      <path d="M3 14C3 4 8 1 14 1s12 3 13 12v15l-7-2-12-2z" fill={C} />
      <path d="M15 1v6" stroke="#00243e" strokeWidth="1.200" />
      <path d="M7 16C9 6 20 5 26 19c-6-3-14-3-19-3z" fill={Y} stroke="#b01818" strokeWidth="1.500" />
      <path d="M12 14c1-6 5-6 6-1" stroke="#fff" strokeWidth="2.500" fill="none" />
      <path d="M4 26c-4-5 0-9 5-8s3 6 0 4M8 29c5 0 6-4 4-8" fill="none" stroke="#0a5060" strokeWidth="4" />
      <path d="M4 26c-4-5 0-9 5-8s3 6 0 4M8 29c5 0 6-4 4-8" fill="none" stroke={Y} strokeWidth="2" />
    </svg>
  ),
  body: (
    <svg viewBox="0 0 30 30" className="h-[60px] w-[60px]" aria-hidden="true">
      <path d="M15 1l6 4 6 3v19l-7 2-8-3z" fill="#020818" />
      <path d="M11 1h4l1 5 4-2 3 3-3 4h6v4l-5 1 5 4-4 4-5-3-1 7h-4l-1-6-5 3-3-3 3-5H1v-5h5L3 8l3-3 5 2z" fill={T} />
      <path d="M11 2v6M4 6l4 4M19 6l-4 4M2 14h5M16 14h6M4 23l4-5M11 27v-6M20 23l-4-4" stroke="#c8f030" strokeWidth="2.200" />
      <path d="M12 9l4 3v6l-4 3-4-3v-6z" fill={C} stroke={Y} strokeWidth="1.500" />
      <path d="M12 12v6" stroke="#083048" strokeWidth="2" />
    </svg>
  ),
};

const tree = [
  { t: "xy 平面", i: "plane" },
  { t: "yz 平面", i: "plane" },
  { t: "zx 平面", i: "plane" },
  { t: "轴系", i: "axis", node: "+" },
  { t: "几何图形集.1", i: "set", node: "-", u: true },
  { t: "填充.1", i: "fill", child: true },
  { t: "零件几何体", i: "body", last: true },
];

function SpecTree() {
  return (
    <div className="-ml-0.5 flex flex-col text-[32px] leading-10 text-white">
      <div className="flex h-[66px] gap-3">
        {treeIcons.part}
        <span className="pt-1.5">Part1</span>
      </div>
      <ul>
        {tree.map((n) => (
          <li key={n.t} className="relative flex h-[71px] items-center">
            <span className={`absolute -top-1 left-5 w-1 bg-white ${n.last ? "h-[42px]" : "h-[75px]"}`} />
            {n.child ? (
              <>
                <span className="absolute -top-3 left-[71px] h-[50px] w-1 bg-white" />
                <span className="ml-[71px] h-1 w-[32px] bg-white" />
              </>
            ) : (
              <span className="ml-5 h-1 w-[33px] bg-white" />
            )}
            {n.node && (
              <button
                type="button"
                aria-label={n.node === "+" ? "expand" : "collapse"}
                className="absolute left-[7px] flex size-[30px] items-center justify-center rounded-full bg-[linear-gradient(#d8d8d8,#6e6e6e)]"
              >
                <span className="h-1 w-5 bg-black" />
                {n.node === "+" && <span className="absolute h-5 w-1 bg-black" />}
              </button>
            )}
            {treeIcons[n.i]}
            <span className={`ml-2 pb-1 ${n.u ? "mb-1 border-b-4 border-white leading-8" : ""}`}>{n.t}</span>
          </li>
        ))}
      </ul>
    </div>
  );
}

/* ---------- dialog ---------- */
const bevel = "border-t-4 border-l-4 border-r-[5px] border-b-[5px] border-t-[#f4f4fc] border-l-[#e8e8f6] border-r-[#8484a0] border-b-[#6c6c8a] bg-[#cfcfe5]";
const off = "text-[#a2a2b2] [text-shadow:2px_2px_0_#f4f4fa]";

function FillDialog() {
  return (
    <section className="absolute top-[506px] right-[22px] flex w-[896px] flex-col bg-[linear-gradient(#e8dad2,#efdfcb_35%,#fae5bf_60%,#fce6bf)] text-[28px] leading-9 text-black shadow-[0_0_14px_#00101c]">
      <header className="flex h-16 items-center bg-white pl-3.5">
        <h2 className="flex-1">填充曲面定义</h2>
        <button type="button" className="w-[108px] text-[26px]">?</button>
        <button type="button" aria-label="close" className="flex w-[108px] justify-center">
          <WinGlyph d={CLOSE} className="size-5" />
        </button>
      </header>

      <div className="relative px-[10px] pt-3 pb-1.5">
        <div role="tablist" className="flex h-[60px] items-end">
          <button type="button" role="tab" aria-selected="true" className="z-10 -mb-1 h-16 w-[177px] rounded-tl-lg border-t-[3px] border-r-[3px] border-l-[3px] border-t-[#7a9cc8] border-r-black border-l-[#7a9cc8] bg-[#ebddd3]">
            其他边界
          </button>
          <button type="button" role="tab" aria-selected="false" className="h-[54px] w-[168px] rounded-tl-lg border-t-[3px] border-r-[3px] border-l-[3px] border-t-[#7a9cc8] border-r-black border-l-[#7a9cc8]">
            内部边界
          </button>
        </div>
        <div className="border-t-[3px] border-r-4 border-b-4 border-l-[3px] border-t-[#7a9cc8] border-r-[#303030] border-b-[#303030] border-l-[#7a9cc8] py-1 pr-1.5 pl-1">
          <table className="w-full table-fixed border border-[#707070] bg-white text-left">
            <colgroup>
              <col className="w-[68px]" />
              <col className="w-[302px]" />
              <col className="w-[303px]" />
              <col />
            </colgroup>
            <thead>
              <tr className="h-[46px] [&>th]:pl-1.5 [&>th]:font-normal">
                <th className="border-r border-[#e6e6e6] whitespace-nowrap">编号</th>
                <th className="border-r border-[#e6e6e6]">曲线</th>
                <th className="border-r border-[#e6e6e6]">支持面</th>
                <th>连续</th>
              </tr>
            </thead>
            <tbody>
              {Array.from({ length: 12 }, (_, r) => (
                <tr key={r} className={r < 11 ? "h-10 border-b border-[#f0f0f0]" : "h-[38px]"}>
                  <td className="border-r border-[#eee] pl-0.5">{r === 0 ? "..." : ""}</td>
                  <td className="border-r border-[#eee]" />
                  <td className="border-r border-[#eee]" />
                  <td />
                </tr>
              ))}
            </tbody>
          </table>
        </div>
      </div>

      <fieldset disabled className="mx-[13px] border-2 border-[#b4b0aa] px-1.5 pt-1 pb-1.5">
        <div className="grid grid-cols-[266px_1fr_1fr]">
          {["之后添加", "替换", "移除", "之前添加", "替换支持面", "移除支持面"].map((t) => (
            <button key={t} type="button" disabled className={`h-[50px] ${bevel} ${off}`}>
              {t}
            </button>
          ))}
        </div>
        <div className="mt-px flex items-center pl-1 text-[#6d6d6d]">
          <span className="w-[90px] whitespace-nowrap">连续：</span>
          <Combo label="连续" value="切线" disabled className="h-[50px] w-[250px]" />
        </div>
      </fieldset>

      <div className="mt-2 flex h-[50px] items-center pl-[13px]">
        <label htmlFor="pass" className="w-[148px] whitespace-nowrap">穿越元素：</label>
        <input id="pass" defaultValue="无选择" className="h-10 w-[626px] border border-[#7a7a7a] bg-white pl-1" />
        <button type="button" aria-label="multi selection" className="flex h-12 w-[50px] items-center justify-center border-t-2 border-r-4 border-b-4 border-l-2 border-t-white border-r-[#808080] border-b-[#808080] border-l-white bg-[#f0e4cc]">
          <Glyph name="bag" className="size-9" />
        </button>
      </div>

      <label className="mt-3 flex h-[38px] items-center gap-2 pl-[19px] text-[#a8a49c] [text-shadow:2px_2px_0_#fdf4e0]">
        <input type="checkbox" disabled className="size-7 appearance-none border-[3px] border-[#6e6e6e]" />
        仅限平面边界
      </label>

      <div className="mt-2.5 flex h-[50px] items-center pl-3.5">
        <span className="w-[98px] whitespace-nowrap">偏差：</span>
        <Combo label="偏差" value="自动" className="h-[50px] w-[334px]" />
        <input aria-label="偏差值" disabled defaultValue="0.001mm" className="ml-0.5 h-[42px] w-[286px] border border-t-2 border-[#909090] bg-[#f0f0f0] pl-0.5 text-[#6d6d6d]" />
        <span className="flex h-10 w-[38px] flex-col border border-[#808080] text-[12px] leading-3">
          <button type="button" aria-label="increase" className="flex flex-1 items-center justify-center border border-[#808080] bg-[#f0f0f0]"><span className="h-0.5 w-1 bg-black" /></button>
          <button type="button" aria-label="decrease" className="flex flex-1 items-center justify-center border border-[#808080] bg-[#f0f0f0]"><span className="h-0.5 w-1.5 bg-black" /></button>
        </span>
      </div>

      <label className="mt-3.5 flex h-9 items-center gap-2 pl-[19px]">
        <input type="checkbox" defaultChecked className="size-7 appearance-none border-4 border-t-[#e8cfa8] border-r-[#fdf2dc] border-b-[#fdf2dc] border-l-[#e8cfa8] bg-[radial-gradient(circle_at_35%_35%,#ffd8a0,#f08828_60%,#8c4810)]" />
        检测标准部分
      </label>
      <label className="mt-5 flex h-9 items-center gap-2 pl-[19px]">
        <input type="checkbox" className="size-7 appearance-none border-[3px] border-[#6e6e6e] bg-[#fffde0]" />
        检查以确保创建填充需要修剪
      </label>

      <div className="mt-[18px] flex h-[76px] justify-end gap-6 pr-6">
        <svg viewBox="0 0 110 84" className="mr-auto h-[84px] w-[110px] self-end" aria-hidden="true">
          <defs>
            <radialGradient id="sun" cx="0.600" cy="0.700" r="0.550">
              <stop offset="0" stopColor="#f49840" />
              <stop offset="0.500" stopColor="#fbc878" />
              <stop offset="1" stopColor="#fce6bf" stopOpacity="0" />
            </radialGradient>
            <radialGradient id="globe" cx="0.500" cy="0.150" r="0.900">
              <stop offset="0" stopColor="#e8f4fc" />
              <stop offset="0.350" stopColor="#78a8c8" />
              <stop offset="1" stopColor="#30445c" />
            </radialGradient>
          </defs>
          <rect width="110" height="84" fill="url(#sun)" />
          <path d="M0 37C34 32 74 50 97 84H0z" fill="url(#globe)" />
          <path d="M0 66c16 2 30 8 42 18M26 50c20 4 36 18 46 34" stroke="#a0b8c8" strokeWidth="4" fill="none" opacity="0.500" />
        </svg>
        <button type="button" disabled className={`flex h-14 w-[138px] items-center justify-center gap-3 ${bevel} ${off}`}>
          <span className="size-6 rounded-full bg-[radial-gradient(circle_at_35%_30%,#fff,#9a9a9a_45%,#606060)]" />
          确定
        </button>
        <button type="button" className={`flex h-14 w-[138px] items-center justify-center gap-3 outline-2 outline-[#404048] ${bevel}`}>
          <span className="size-6 rounded-full bg-[radial-gradient(circle_at_35%_30%,#fff,#e83028_40%,#701008)]" />
          取消
        </button>
        <button type="button" disabled className={`h-14 w-[138px] ${bevel} ${off}`}>预览</button>
      </div>
    </section>
  );
}

function Compass() {
  return (
    <svg viewBox="0 -10 200 260" className="absolute top-[26px] right-[120px] h-[260px] w-[200px] overflow-visible" fill="none" stroke="#dccbf8" strokeWidth="4" aria-hidden="true">
      <g fill="#0b4450">
        <path d="M78 35c44 8 86 52 94 112l-94-18z" />
        <path d="M78 35C54 60 38 110 36 170l42-41z" />
        <path d="M49 175l101 21c12 34-22 47-72 47-34 0-60-8-73-23z" />
      </g>
      <path d="M78 10v190" strokeWidth="5" />
      <circle cx="78" cy="9" r="7" fill="#dccbf8" stroke="none" />
      <path d="M68 196h21v21H68z" fill="#d40000" stroke="none" />
      <g fill="#ffff20" stroke="none" fontSize="32" fontFamily="Open Sans">
        <text x="86" y="22">z</text>
        <text x="180" y="164">y</text>
        <text x="47" y="184">x</text>
      </g>
    </svg>
  );
}

function CenterAxes() {
  return (
    <svg viewBox="0 -16 170 186" className="absolute top-[738px] left-[1824px] h-[186px] w-[170px] overflow-visible" fill="none" stroke="#fff" strokeWidth="2" aria-hidden="true">
      <path d="M50 117V26M50 117l90 17M50 117l-28 23M33 66v34l-12 12M84 56v32l32 10M52 151l15-12 34 8" />
      <circle cx="50" cy="117" r="6" fill="#fff" />
      <g fill="#fff" stroke="none" fontSize="32" fontFamily="Open Sans">
        <text x="47" y="24">z</text>
        <text x="144" y="138">y</text>
        <text x="6" y="158">x</text>
      </g>
    </svg>
  );
}

export default function App() {
  return (
    <div className='flex h-screen flex-col overflow-hidden bg-[#cfcfe5] font-["Open_Sans","Noto_Sans_CJK_SC",sans-serif] text-black'>
      <header className="flex h-[52px] shrink-0 items-center bg-white text-[#999]">
        <AppLogo className="ml-1 size-8" />
        <h1 className="ml-2 flex-1 text-[29px] leading-9">CATIA V5 : 管理模式 - [Part1]</h1>
        <button type="button" aria-label="minimize" className="flex w-[107px] justify-center"><WinGlyph d={MIN} className="size-5" /></button>
        <button type="button" aria-label="restore" className="flex w-[107px] justify-center"><WinGlyph d={RESTORE} className="size-5" /></button>
        <button type="button" aria-label="close" className="flex w-[112px] justify-center"><WinGlyph d={CLOSE} className="size-5" /></button>
      </header>

      <nav className="flex h-11 shrink-0 items-center text-[28px] leading-9">
        <AppLogo className="mr-0.5 ml-1 size-10" />
        {["开始", "文件", "编辑", "视图", "插入", "工具", "窗口", "帮助"].map((m, i) => (
          <button key={m} type="button" className={`h-11 w-[100px] pl-1 text-left ${i === 0 ? "bg-[#ffe6b8]" : ""}`}>
            {m}
          </button>
        ))}
        <span className="ml-auto flex text-[#8a98a4]">
          {[MIN, RESTORE, CLOSE].map((d) => (
            <button key={d} type="button" aria-label="document window" className="flex h-11 w-11 items-center justify-center border-l border-white bg-[#e4e4e4]">
              <WinGlyph d={d} className="size-2" />
            </button>
          ))}
        </span>
      </nav>

      <div role="toolbar" className={`flex h-[86px] shrink-0 items-center overflow-hidden border-b-[3px] border-[#55555f] pt-[10px] pb-1 ${barBg}`}>
        <Grip className="mr-3 ml-[15px]" />
        <div className="mr-px flex gap-[3px]">
          {[1, 2, 3].map((k) => (
            <Combo key={k} label={`属性 ${k}`} value="自动" className="h-[50px] w-[165px]" />
          ))}
        </div>
        <Row items={topA} />
      </div>

      <div className="flex min-h-0 flex-1">
        <main className="relative min-w-0 flex-1 overflow-hidden border-l-2 border-[#808088] bg-[#00243e]">
          <SpecTree />
          <Palette title="Realistic Shape Optimizer" className="top-[41px] left-[817px] w-[514px]">
            <div className={`flex h-[81px] items-center border-b-2 border-[#70707c] pl-3.5 ${barBg}`}>
              {["result", "loads", "arrowsurf", "arrows", "funnel", "chartsurf", "dome", "report"].map((n) => (
                <Tool key={n} id={n} className="h-14 w-[61px]" />
              ))}
            </div>
          </Palette>
          <Palette title="用户选择过滤器" className="top-[42px] right-[449px] w-[672px]">
            <div className={`flex h-[81px] items-center border-b-2 border-[#70707c] pt-1.5 pl-3 ${barBg}`}>
              <Row items={["pointoff", "curvesel", "surfoff", "voloff", "|", "facesel", "edgesel", "|", "featsel*", "|", "gridsel", "|", "snap"]} />
            </div>
          </Palette>
          <Compass />
          <CenterAxes />
          <Palette title="视" className="top-[392px] right-[127px] w-[84px]">
            <div className="flex h-[130px] justify-center bg-[linear-gradient(to_right,#fff,#cfcfe5_35%,#cfcfe5_75%,#9c9cae)] pt-5">
              <Glyph name="cylinder" className="size-10" />
            </div>
          </Palette>
          <svg viewBox="0 0 6 24" className="absolute right-4 bottom-[58px] h-6 w-1.5" aria-hidden="true">
            <path d="M5 0L1 24" stroke="#fff" strokeWidth="2" />
          </svg>
          <FillDialog />
        </main>

        <aside role="toolbar" className="relative flex w-[91px] shrink-0 flex-col bg-[linear-gradient(to_right,#ffffff,#ececf6_10%,#cfcfe5_30%,#cfcfe5_76%,#9c9cae_100%)]">
          <SideGrip className="mt-2 mb-[9px]" />
          <Tool id="seat" className="h-[72px] w-full" />
          {side.map((g, i) => (
            <React.Fragment key={i}>
              <SideGrip className={sideGaps[i]} />
              {g.map((n) => (
                <Tool key={n} id={n} className="ml-3.5 h-16 w-[66px]" />
              ))}
            </React.Fragment>
          ))}
          <svg viewBox="0 0 60 44" className="absolute right-0 bottom-[-10px] z-10 h-11 w-[66px]" aria-hidden="true">
            <path d="M30 4l8 7 8-7M30 12l8 7 8-7" fill="none" stroke="#fff" strokeWidth="2.500" />
            <path d="M3 2v30l7-6 5 12 5-2-5-12h9z" fill="#fff" stroke="#000" strokeWidth="1.200" />
          </svg>
        </aside>
      </div>

      <div role="toolbar" className={`flex h-[91px] shrink-0 items-center overflow-hidden border-b-[3px] border-[#55555f] pt-3 pb-2 ${barBg}`}>
        <Grip className="mr-[10px] ml-3" />
        <Row items={botA} />
        <Combo label="几何图形集" value="几何图形集.1" className="h-[50px] w-[418px]" />
        <Grip className="ml-[23px] mr-[9px]" />
        <Row items={botB} />
        <svg viewBox="0 0 20 20" className="mt-1 size-5 self-start" aria-hidden="true">
          <path d="M1 1l6 9-6 9M10 1l6 9-6 9" fill="none" stroke="#fff" strokeWidth="2.500" />
        </svg>
        <svg viewBox="0 0 96 70" className="-mt-2.5 mr-1 ml-auto h-[70px] w-24 self-start" aria-hidden="true">
          <path d="M20 4c14-3 24 3 15 10l-14 9" fill="none" stroke="#d8142c" strokeWidth="5" />
          <path d="M12 27c24-3 30 4 20 14s-16 9-28 7l12-18" fill="none" stroke="#28407c" strokeWidth="5" />
          <path d="M56 20c-16 0-20 6-11 11s4 13-14 13" fill="none" stroke="#f08a20" strokeWidth="5" />
          <text x="16" y="65" fontSize="22" fontStyle="italic" fontWeight="700" fontFamily="Liberation Sans" fill="#28407c">CATIA</text>
        </svg>
      </div>

      <footer className="flex h-[30px] shrink-0 overflow-hidden text-[28px] leading-9">
        <span className="flex-1 pt-1.5 pl-2">将新几何体插入零件中</span>
        <label htmlFor="cmd" className="mr-2 pt-1.5 whitespace-nowrap">c:几何体</label>
        <input id="cmd" className="mt-1 h-10 w-[692px] border border-[#7a7a7a] bg-white" />
        <div className="relative flex">
          {["a", "b"].map((k) => (
            <button key={k} type="button" aria-label={`status ${k}`} className="h-11 w-[77px] border-4 border-t-white border-r-[#80809a] border-b-[#80809a] border-l-white bg-[#cfcfe5] pl-5">
              <span className="block size-7 border-4 border-[#404048] bg-[#c0c0c0]" />
            </button>
          ))}
          <span className="absolute top-1.5 right-0.5 font-['Liberation_Mono','Noto_Sans_CJK_SC',monospace] text-[15px] leading-5 whitespace-nowrap text-[#4c4c54] [text-shadow:1px_1px_0_#fff]">
            UG爱好者论坛 WWW.UGSNX.COM
          </span>
        </div>
      </footer>
    </div>
  );
}
